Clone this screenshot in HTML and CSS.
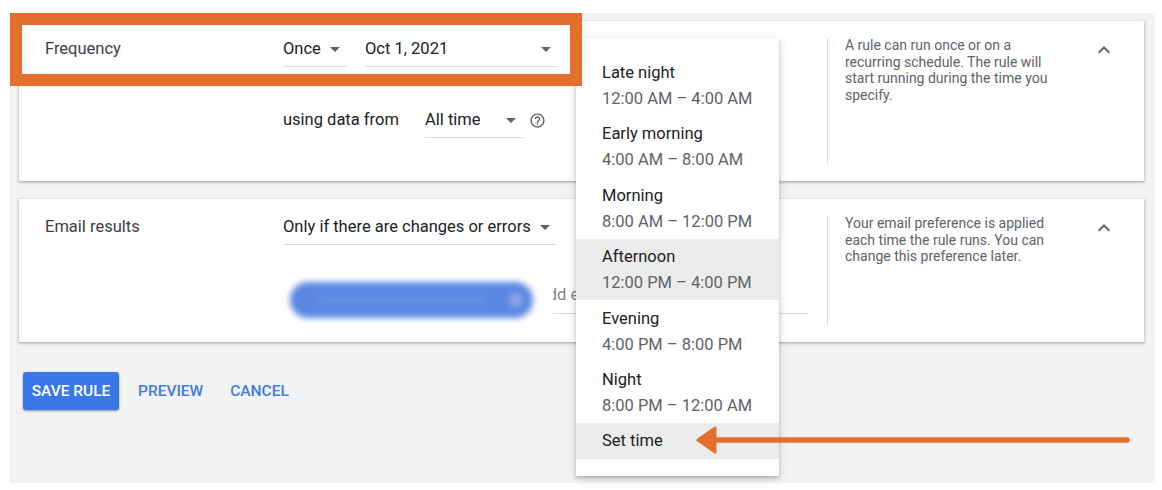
FILE: index.html
```html
<!DOCTYPE html>
<html>
<head>
<meta charset="utf-8">
<title>Rule schedule</title>
<link rel="stylesheet" href="styles.css">
</head>
<body>
<div class="page">
  <section class="card card-freq">
    <div class="label">Frequency</div>
    <div class="main">
      <div class="row">
        <div class="field f-once"><span>Once</span><svg class="drop" viewBox="0 0 24 24"><path d="M7 10l5 5 5-5z"/></svg></div>
        <div class="field f-date"><span>Oct 1, 2021</span><svg class="drop" viewBox="0 0 24 24"><path d="M7 10l5 5 5-5z"/></svg></div>
      </div>
      <div class="row row2">
        <span class="text">using data from</span>
        <div class="field f-range"><span>All time</span><svg class="drop" viewBox="0 0 24 24"><path d="M7 10l5 5 5-5z"/></svg></div>
        <svg class="help" viewBox="0 0 24 24"><path d="M11 18h2v-2h-2v2zm1-16C6.480 2 2 6.48 2 12s4.48 10 10 10 10-4.48 10-10S17.52 2 12 2zm0 18c-4.41 0-8-3.59-8-8s3.59-8 8-8 8 3.59 8 8-3.59 8-8 8zm0-14c-2.21 0-4 1.79-4 4h2c0-1.1.9-2 2-2s2 .9 2 2c0 2-3 1.75-3 5h2c0-2.25 3-2.5 3-5 0-2.21-1.79-4-4-4z"/></svg>
      </div>
    </div>
    <div class="divider"></div>
    <p class="aside">A rule can run once or on a recurring schedule. The rule will start running during the time you specify.</p>
    <svg class="chev" viewBox="0 0 24 24"><path d="M7.41 15.41L12 10.83l4.59 4.58L18 14l-6-6-6 6z"/></svg>
  </section>

  <section class="card card-email">
    <div class="label">Email results</div>
    <div class="main">
      <div class="row">
        <div class="field f-email"><span>Only if there are changes or errors</span><svg class="drop" viewBox="0 0 24 24"><path d="M7 10l5 5 5-5z"/></svg></div>
      </div>
      <div class="row row-chip">
        <div class="chip"><span class="chip-text"></span><span class="chip-x"></span></div>
        <div class="email-input">Add emails</div>
      </div>
    </div>
    <div class="divider"></div>
    <p class="aside">Your email preference is applied each time the rule runs. You can change this preference later.</p>
    <svg class="chev" viewBox="0 0 24 24"><path d="M7.41 15.41L12 10.83l4.59 4.58L18 14l-6-6-6 6z"/></svg>
  </section>

  <div class="actions">
    <button class="btn-primary">Save rule</button>
    <button class="btn-text btn-preview">Preview</button>
    <button class="btn-text btn-cancel">Cancel</button>
  </div>
</div>

<div class="menu">
  <div class="item"><div class="name">Late night</div><div class="time">12:00 AM – 4:00 AM</div></div>
  <div class="item"><div class="name">Early morning</div><div class="time">4:00 AM – 8:00 AM</div></div>
  <div class="item"><div class="name">Morning</div><div class="time">8:00 AM – 12:00 PM</div></div>
  <div class="item active"><div class="name">Afternoon</div><div class="time">12:00 PM – 4:00 PM</div></div>
  <div class="item"><div class="name">Evening</div><div class="time">4:00 PM – 8:00 PM</div></div>
  <div class="item"><div class="name">Night</div><div class="time">8:00 PM – 12:00 AM</div></div>
  <div class="set-time">Set time</div>
</div>

<div class="highlight-box"></div>

<svg class="arrow" viewBox="0 0 445 40">
  <line x1="24" y1="20" x2="437" y2="20" stroke="#e46f2d" stroke-width="5.5" stroke-linecap="round"/>
  <polygon points="8,20 25,8 25,32" fill="#e46f2d" stroke="#e46f2d" stroke-width="3" stroke-linejoin="round"/>
</svg>
</body>
</html>
```

FILE: styles.css
```css
* { box-sizing: border-box; }

html, body {
  margin: 0;
  background: #ffffff;
}

body {
  position: relative;
  width: 1162px;
  height: 490px;
  overflow: hidden;
  font-family: Roboto, "Noto Sans", "Liberation Sans", Arial, sans-serif;
  color: #202124;
}

.page {
  margin: 13px 7px 0 10px;
  height: 470px;
  background: #f1f3f4;
  padding: 8px 11px 0 9px;
}

.card {
  display: flex;
  align-items: stretch;
  background: #ffffff;
  padding: 18px 28px 17px 26px;
  box-shadow: 0 1px 2px rgba(60, 64, 67, 0.3), 0 1px 3px 1px rgba(60, 64, 67, 0.15);
}

.card-freq { height: 160px; }
.card-email { height: 143px; margin-top: 18px; }

.label {
  flex: none;
  width: 238px;
  font-size: 16.5px;
  line-height: 20px;
  color: #3c4043;
}

.main {
  flex: none;
  width: 544px;
}

.row {
  display: flex;
  align-items: flex-start;
}

.field {
  display: flex;
  align-items: center;
  justify-content: space-between;
  height: 28px;
  padding-bottom: 7px;
  border-bottom: 1px solid #dadce0;
  font-size: 16.5px;
  line-height: 20px;
  color: #202124;
  white-space: nowrap;
}

.drop {
  flex: none;
  width: 24px;
  height: 24px;
  margin: -2px 0;
  fill: #5f6368;
}

.f-once { width: 64px; }
.f-date { width: 193px; margin-left: 18px; }

.row2 { margin-top: 43px; }

.text {
  width: 142px;
  font-size: 16.5px;
  line-height: 20px;
  color: #202124;
}

.f-range { width: 98px; }

.help {
  width: 17px;
  height: 17px;
  margin: 1.5px 0 0 5.5px;
  fill: #5f6368;
}

.f-email { width: 274px; }

.row-chip { margin-top: 37px; }

.chip {
  position: relative;
  width: 243px;
  height: 36px;
  margin-left: 7px;
  border-radius: 18px;
  background: #5a86e2;
  filter: blur(3px);
}

.chip-text {
  position: absolute;
  left: 26px;
  top: 15px;
  width: 170px;
  height: 6px;
  border-radius: 3px;
  background: rgba(255, 255, 255, 0.1);
}

.chip-x {
  position: absolute;
  right: 10px;
  top: 11px;
  width: 14px;
  height: 14px;
  border-radius: 50%;
  background: #8eabea;
}

.email-input {
  width: 255px;
  height: 29px;
  margin: 3px 0 0 20px;
  padding-bottom: 9px;
  border-bottom: 1px solid #dadce0;
  background: #ffffff;
  font-size: 16.5px;
  line-height: 20px;
  color: #80868b;
  white-space: nowrap;
  overflow: hidden;
  text-indent: -16px;
}

.divider {
  flex: none;
  width: 1px;
  margin-top: -1px;
  background: #dadce0;
}

.aside {
  flex: none;
  width: 232px;
  margin: -2px 0 0;
  padding-left: 17px;
  font-size: 14px;
  line-height: 16.5px;
  color: #5f6368;
}

.chev {
  flex: none;
  width: 24px;
  height: 24px;
  margin: -1px 0 0 auto;
  fill: #5f6368;
}

.actions {
  display: flex;
  align-items: center;
  margin-top: 30px;
  padding-left: 4px;
}

.btn-primary {
  width: 96px;
  height: 38px;
  padding: 0;
  border: none;
  border-radius: 3px;
  background: #3b78e7;
  color: #ffffff;
  font-family: inherit;
  font-size: 15.5px;
  font-weight: 500;
  text-transform: uppercase;
  box-shadow: 0 1px 2px rgba(0, 0, 0, 0.3), 0 1px 3px rgba(0, 0, 0, 0.12);
}

.btn-text {
  padding: 0;
  border: none;
  background: none;
  color: #3f7be6;
  font-family: inherit;
  font-size: 15.5px;
  font-weight: 500;
  text-transform: uppercase;
}

.btn-preview { margin-left: 19px; }
.btn-cancel { margin-left: 27px; }

.menu {
  position: absolute;
  left: 576px;
  top: 38px;
  width: 203px;
  height: 438px;
  padding-top: 16px;
  background: #ffffff;
  box-shadow: 0 2px 4px rgba(0, 0, 0, 0.2), 0 3px 10px rgba(0, 0, 0, 0.12);
}

.item {
  height: 61.5px;
  padding: 7.5px 0 0 26px;
}

.item .name {
  font-size: 16.5px;
  line-height: 22px;
  color: #202124;
}

.item .time {
  margin-top: 4px;
  font-size: 16.5px;
  line-height: 22px;
  color: #5f6368;
  white-space: nowrap;
}

.item.active { background: #ececec; }

.set-time {
  height: 36px;
  padding-left: 26px;
  font-size: 16.5px;
  line-height: 36px;
  color: #202124;
  background: #ececec;
}

.highlight-box {
  position: absolute;
  left: 10px;
  top: 13px;
  width: 572px;
  height: 73px;
  border: 12px solid #e46f2d;
}

.arrow {
  position: absolute;
  left: 690px;
  top: 420px;
  width: 445px;
  height: 40px;
}
```
